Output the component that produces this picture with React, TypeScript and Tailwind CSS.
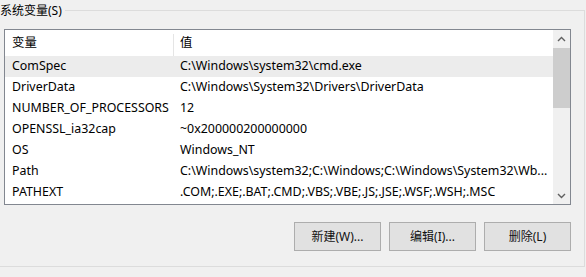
import React from 'react';

const rows = [
  { name: 'ComSpec', value: 'C:\\Windows\\system32\\cmd.exe' },
  { name: 'DriverData', value: 'C:\\Windows\\System32\\Drivers\\DriverData' },
  { name: 'NUMBER_OF_PROCESSORS', value: '12' },
  { name: 'OPENSSL_ia32cap', value: '~0x200000200000000' },
  { name: 'OS', value: 'Windows_NT' },
  { name: 'Path', value: 'C:\\Windows\\system32;C:\\Windows;C:\\Windows\\System32\\Wb...' },
  { name: 'PATHEXT', value: '.COM;.EXE;.BAT;.CMD;.VBS;.VBE;.JS;.JSE;.WSF;.WSH;.MSC' },
];

const Chevron = ({ up }: { up?: boolean }) => (
  <svg width="9" height="6" viewBox="0 0 9 6" fill="none">
    <path
      d={up ? 'M1 5 L4.5 1.5 L8 5' : 'M1 1 L4.5 4.5 L8 1'}
      stroke="#606060"
      strokeWidth="1.4"
    />
  </svg>
);

const Button = ({ label }: { label: string }) => (
  <button className="w-[87px] h-[29px] border border-[#adadad] bg-[#e1e1e1] text-[12px] text-[#111]">
    {label}
  </button>
);

export default function App() {
  return (
    <div className="w-[586px] h-[277px] bg-[#f0f0f0] overflow-hidden text-[12px] text-black font-['Noto_Sans','Noto_Sans_CJK_SC',sans-serif]">
      <fieldset className="ml-[-8px] mt-[2px] w-[593px] h-[265px] border border-[#dcdcdc] p-0">
        <legend className="ml-[7px] pr-[3px] leading-[17px]">系统变量(S)</legend>
        <div className="pl-[11px] pr-[13px] pt-[10px]">
          {/* list view */}
          <div className="h-[176px] border border-[#828790] bg-white flex text-[12.4px]">
            <div className="flex-1 overflow-hidden">
              <div className="h-[26px] flex items-center">
                <div className="w-[168px] pl-[7px]">变量</div>
                <div className="w-px h-[22px] self-end bg-[#e5e5e5]" />
                <div className="pl-[6px]">值</div>
              </div>
              {rows.map((r, i) => (
                <div
                  key={r.name}
                  className={`h-[21px] flex items-center whitespace-nowrap ${i === 0 ? 'bg-[#ececec]' : ''}`}
                >
                  <div className="w-[168px] pl-[7px] overflow-hidden">{r.name}</div>
                  <div className="pl-[7px] overflow-hidden">{r.value}</div>
                </div>
              ))}
            </div>
            {/* scrollbar */}
            <div className="w-[17px] bg-[#f0f0f0] flex flex-col">
              <div className="h-[17px] flex items-center justify-center">
                <Chevron up />
              </div>
              <div className="flex-1">
                <div className="h-[60px] mt-px bg-[#cdcdcd]" />
              </div>
              <div className="h-[17px] flex items-center justify-center">
                <Chevron />
              </div>
            </div>
          </div>
          <div className="mt-[17px] flex justify-end gap-[8px]">
            <Button label="新建(W)..." />
            <Button label="编辑(I)..." />
            <Button label="删除(L)" />
          </div>
        </div>
      </fieldset>
    </div>
  );
}
